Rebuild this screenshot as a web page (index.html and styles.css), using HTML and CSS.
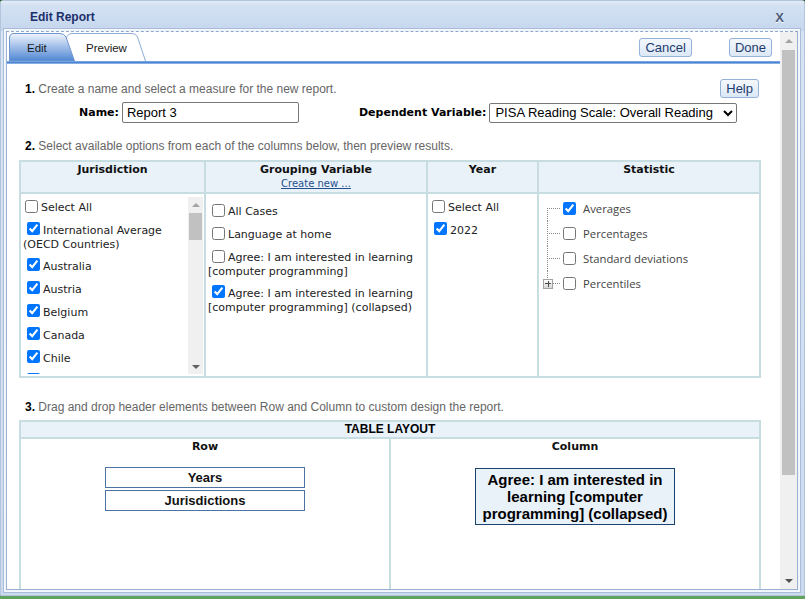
FILE: index.html
```html
<!DOCTYPE html>
<html>
<head>
<meta charset="utf-8">
<title>Edit Report</title>
<link rel="stylesheet" href="styles.css">
</head>
<body>
<div class="window">
  <div class="titlebar">
    <span class="title">Edit Report</span>
    <span class="close">X</span>
  </div>
  <div class="panel">
    <div class="main">
      <div class="tabbar">
        <div class="tab tab-edit">
          <svg class="tab-bg" viewBox="0 0 66 28" width="66" height="28" preserveAspectRatio="none">
            <defs>
              <linearGradient id="ge" x1="0" y1="0" x2="0" y2="1">
                <stop offset="0" stop-color="#f0f5fc"/>
                <stop offset="0.35" stop-color="#b6cdee"/>
                <stop offset="1" stop-color="#5087d4"/>
              </linearGradient>
            </defs>
            <path d="M0.5,28 L0.5,5 Q0.5,0.5 5,0.5 L51,0.5 Q55,0.5 57,4 L65.5,28 Z" fill="url(#ge)" stroke="#6f95cf" stroke-width="1"/>
          </svg>
          <span class="tab-label">Edit</span>
        </div>
        <div class="tab tab-preview">
          <svg class="tab-bg" viewBox="0 0 84 28" width="84" height="28" preserveAspectRatio="none">
            <path d="M0,28 L4,6 Q5.5,0.5 10,0.5 L70,0.5 Q74,0.5 75.5,4 L83.5,28" fill="#ffffff" stroke="#8eaad6" stroke-width="1"/>
          </svg>
          <span class="tab-label">Preview</span>
        </div>
        <div class="spacer"></div>
        <button class="btn">Cancel</button>
        <button class="btn done">Done</button>
      </div>
      <div class="tabline"></div>

      <div class="step1">
        <p class="step"><b>1.</b> Create a name and select a measure for the new report.</p>
        <button class="btn help">Help</button>
      </div>

      <div class="fields">
        <label class="flabel" for="rname">Name:</label>
        <input id="rname" class="name-input" type="text" value="Report 3">
        <label class="flabel dep" for="dvar">Dependent Variable:</label>
        <select id="dvar" class="dep-select">
          <option>PISA Reading Scale: Overall Reading</option>
        </select>
      </div>

      <p class="step step2"><b>2.</b> Select available options from each of the columns below, then preview results.</p>

      <div class="grid">
        <div class="hcell"><div class="htitle">Jurisdiction</div></div>
        <div class="hcell"><div class="htitle">Grouping Variable</div><a class="create" href="#">Create new ...</a></div>
        <div class="hcell"><div class="htitle">Year</div></div>
        <div class="hcell"><div class="htitle">Statistic</div></div>

        <div class="bcell jcell">
          <div class="items">
            <div class="item sel-all"><input type="checkbox">Select All</div>
            <div class="item two"><input type="checkbox" checked>International Average (OECD Countries)</div>
            <div class="item"><input type="checkbox" checked>Australia</div>
            <div class="item"><input type="checkbox" checked>Austria</div>
            <div class="item"><input type="checkbox" checked>Belgium</div>
            <div class="item"><input type="checkbox" checked>Canada</div>
            <div class="item"><input type="checkbox" checked>Chile</div>
            <div class="item"><input type="checkbox" checked></div>
          </div>
          <div class="sbar">
            <div class="sb-btn"><span class="arr-up"></span></div>
            <div class="sb-thumb"></div>
            <div class="sb-fill"></div>
            <div class="sb-btn"><span class="arr-down"></span></div>
          </div>
        </div>

        <div class="bcell gcell">
          <div class="item"><input type="checkbox">All Cases</div>
          <div class="item"><input type="checkbox">Language at home</div>
          <div class="item two"><input type="checkbox">Agree: I am interested in learning [computer programming]</div>
          <div class="item two"><input type="checkbox" checked>Agree: I am interested in learning [computer programming] (collapsed)</div>
        </div>

        <div class="bcell ycell">
          <div class="item sel-all"><input type="checkbox">Select All</div>
          <div class="item"><input type="checkbox" checked>2022</div>
        </div>

        <div class="bcell scell">
          <ul class="tree">
            <li><span class="branch first"></span><input type="checkbox" checked><span>Averages</span></li>
            <li><span class="branch mid"></span><input type="checkbox"><span>Percentages</span></li>
            <li><span class="branch mid"></span><input type="checkbox"><span>Standard deviations</span></li>
            <li><span class="branch last"><span class="plus"></span></span><input type="checkbox"><span>Percentiles</span></li>
          </ul>
        </div>
      </div>

      <p class="step step3"><b>3.</b> Drag and drop header elements between Row and Column to custom design the report.</p>

      <div class="layout">
        <div class="lhead">TABLE LAYOUT</div>
        <div class="lbody">
          <div class="lcol">
            <div class="lh">Row</div>
            <div class="rowbox first-box">Years</div>
            <div class="rowbox">Jurisdictions</div>
          </div>
          <div class="lcol">
            <div class="lh">Column</div>
            <div class="colbox">Agree: I am interested in learning [computer programming] (collapsed)</div>
          </div>
        </div>
      </div>
    </div>
    <div class="vscroll">
      <div class="vs-btn"><span class="arr-up"></span></div>
      <div class="vs-thumb"></div>
      <div class="vs-fill"></div>
      <div class="vs-btn"><span class="arr-down dark"></span></div>
    </div>
  </div>
</div>
</body>
</html>
```

FILE: styles.css
```css
* { box-sizing: border-box; }

html, body {
  margin: 0;
  padding: 0;
}

body {
  width: 805px;
  height: 599px;
  overflow: hidden;
  background: linear-gradient(#2f5a30 0 1px, #5fa35f 1px);
  font-family: "Liberation Sans", Arial, sans-serif;
}

.window {
  width: 805px;
  height: 596px;
  display: flex;
  flex-direction: column;
  background: linear-gradient(#d9e4f4, #cddbef);
  border: 1px solid #b3c4dd;
  border-radius: 3px 3px 0 0;
  padding: 0 6px 5px 5px;
}

.titlebar {
  height: 30px;
  flex: none;
  margin: 0 -6px 0 -5px;
  padding: 2px 20px 0 29px;
  display: flex;
  align-items: center;
  justify-content: space-between;
  background: linear-gradient(#e2eaf6, #d4e1f3 15%, #c5d7ee);
}

.title {
  font-size: 12px;
  font-weight: bold;
  color: #1b2f6b;
}

.close {
  font-size: 13px;
  font-weight: bold;
  color: #4b5b78;
  text-shadow: 0 1px 0 #ffffff;
}

.panel {
  flex: 1;
  min-height: 0;
  display: flex;
  background: #ffffff;
  border: 1px solid #9bb1d4;
  border-top: 1px dashed #8ea7cc;
  box-shadow: 0 0 0 1px #eef3fa, 0 0 0 2px #f4f7fb, 0 0 0 3px #a9bcd9;
}

.main {
  flex: 1;
  min-width: 0;
  overflow: hidden;
  padding-top: 1px;
}

/* tabs */
.tabbar {
  height: 28px;
  display: flex;
  align-items: flex-start;
  padding: 0 8px 0 2px;
}

.tab {
  position: relative;
  height: 28px;
  flex: none;
  font-size: 11.5px;
  color: #1a1a1a;
}

.tab-bg {
  position: absolute;
  left: 0;
  top: 0;
}

.tab-label {
  position: relative;
  display: block;
  line-height: 28px;
  padding-top: 1px;
}

.tab-edit {
  width: 66px;
  z-index: 2;
}

.tab-edit .tab-label { padding-left: 18px; }

.tab-preview {
  width: 84px;
  margin-left: -13px;
  z-index: 1;
}

.tab-preview .tab-label { padding-left: 24px; }

.spacer { flex: 1; }

.btn {
  font-family: "Liberation Sans", Arial, sans-serif;
  font-size: 13px;
  color: #1e3c6e;
  background: linear-gradient(#f4f8fd, #dce8f6);
  border: 1px solid #94b2da;
  border-radius: 3px;
  height: 19px;
  padding: 0 5px;
  line-height: 17px;
  margin: 5px 0 0 0;
}

.btn.done { margin-left: 37px; }

.tabline {
  height: 3px;
  background: linear-gradient(#8fb4e6, #4b84d2 50%, #a7c5ec);
}

/* steps */
.step {
  margin: 0;
  font-size: 12px;
  line-height: 14px;
  color: #666666;
}

.step b { color: #000000; }

.step1 {
  height: 19px;
  margin: 15px 21px 0 18px;
  display: flex;
  align-items: center;
  justify-content: space-between;
}

.btn.help { margin: 0; }

.fields {
  height: 21px;
  margin: 4px 0 0 72px;
  display: flex;
  align-items: center;
}

.flabel {
  font-family: "DejaVu Sans", Verdana, sans-serif;
  font-size: 11px;
  font-weight: bold;
  color: #000000;
  margin-right: 3px;
}

.flabel.dep { margin-left: 60px; }

.name-input {
  width: 177px;
  height: 21px;
  border: 1px solid #767676;
  border-radius: 2px;
  padding: 0 4px;
  font-family: "Liberation Sans", Arial, sans-serif;
  font-size: 13px;
  color: #000000;
}

.dep-select {
  width: 248px;
  height: 20px;
  border: 1px solid #767676;
  border-radius: 2px;
  background: #ffffff;
  color: #000000;
  font-family: "Liberation Sans", Arial, sans-serif;
  font-size: 13px;
  padding: 0 1px;
}

.step2 { margin: 16px 0 0 18px; }
.step3 { margin: 22px 0 0 18px; }

/* options grid */
.grid {
  margin: 7px 19px 0 12px;
  display: grid;
  grid-template-columns: 183px 220px 109px 220px;
  grid-template-rows: 30px 182px;
  gap: 2px;
  padding: 2px;
  background: #c8dde1;
}

.hcell {
  background: #e9f1f9;
  text-align: center;
  padding-top: 1px;
  font-family: "DejaVu Sans", Verdana, sans-serif;
}

.htitle {
  font-size: 11px;
  font-weight: bold;
  line-height: 14px;
  color: #111111;
}

.create {
  display: block;
  font-size: 10px;
  line-height: 14px;
  color: #1f4f8f;
}

.bcell {
  background: #ffffff;
  overflow: hidden;
  font-family: "DejaVu Sans", Verdana, sans-serif;
  font-size: 11px;
  color: #222222;
}

.item {
  line-height: 14px;
  margin-bottom: 9px;
}

.item.two { margin-bottom: 8px; }

.item input {
  width: 13px;
  height: 13px;
  margin: -1px 3px 0 4px;
  vertical-align: top;
}

.item input:checked { margin-top: -2px; }

.item.sel-all input { margin-left: 2px; }

.jcell {
  display: flex;
  padding: 3px 1px 2px 0;
}

.jcell .items {
  flex: 1;
  overflow: hidden;
  padding: 4px 0 0 2px;
}

.sbar {
  width: 15px;
  flex: none;
  background: #f0f0f0;
  display: flex;
  flex-direction: column;
  align-items: center;
}

.sb-btn {
  height: 15px;
  width: 15px;
  flex: none;
  display: flex;
  align-items: center;
  justify-content: center;
}

.sb-thumb {
  width: 13px;
  height: 27px;
  margin-top: 1px;
  background: #c1c1c1;
  flex: none;
}

.sb-fill { flex: 1; }

.arr-up {
  width: 0;
  height: 0;
  border-left: 4px solid transparent;
  border-right: 4px solid transparent;
  border-bottom: 4px solid #a3a3a3;
}

.arr-down {
  width: 0;
  height: 0;
  border-left: 4px solid transparent;
  border-right: 4px solid transparent;
  border-top: 4px solid #606060;
}

.gcell { padding: 11px 2px 0 2px; }

.ycell { padding: 7px 2px 0 2px; }

/* statistic tree */
.scell {
  font-family: "Open Sans", "Segoe UI", sans-serif;
  font-size: 11.3px;
  color: #444444;
}

.tree {
  list-style: none;
  margin: 0;
  padding: 2px 0 0 8px;
}

.tree li {
  height: 25px;
  display: flex;
  align-items: center;
}

.tree input {
  width: 13px;
  height: 13px;
  margin: 0 7px 0 0;
  flex: none;
}

.branch {
  width: 16px;
  height: 25px;
  flex: none;
  display: flex;
  align-items: center;
  background-repeat: no-repeat;
}

.branch.first {
  background-image:
    repeating-linear-gradient(90deg, #8a8a8a 0 1px, transparent 1px 2px),
    repeating-linear-gradient(180deg, #8a8a8a 0 1px, transparent 1px 2px);
  background-position: 0 12px, 0 12px;
  background-size: 14px 1px, 1px 13px;
}

.branch.mid {
  background-image:
    repeating-linear-gradient(90deg, #8a8a8a 0 1px, transparent 1px 2px),
    repeating-linear-gradient(180deg, #8a8a8a 0 1px, transparent 1px 2px);
  background-position: 0 12px, 0 0;
  background-size: 14px 1px, 1px 25px;
}

.branch.last {
  background-image:
    repeating-linear-gradient(90deg, #8a8a8a 0 1px, transparent 1px 2px),
    repeating-linear-gradient(180deg, #8a8a8a 0 1px, transparent 1px 2px);
  background-position: 0 12px, 0 0;
  background-size: 14px 1px, 1px 12px;
}

.plus {
  width: 10px;
  height: 10px;
  margin-left: -4px;
  border: 1px solid #a2a2a2;
  background:
    linear-gradient(#4a4a4a, #4a4a4a) center / 6px 1px no-repeat,
    linear-gradient(#4a4a4a, #4a4a4a) center / 1px 6px no-repeat,
    linear-gradient(#ffffff, #d6d6d6);
}

/* table layout */
.layout {
  margin: 6px 19px 0 12px;
  border: 2px solid #c8dde1;
  height: 220px;
  display: flex;
  flex-direction: column;
}

.lhead {
  height: 17px;
  flex: none;
  background: #e9f1f9;
  border-bottom: 2px solid #c8dde1;
  text-align: center;
  font-size: 12px;
  font-weight: bold;
  line-height: 15px;
  color: #000000;
}

.lbody {
  flex: 1;
  display: grid;
  grid-template-columns: 368px 368px;
  gap: 2px;
  background: #c8dde1;
}

.lcol {
  background: #ffffff;
  display: flex;
  flex-direction: column;
  align-items: center;
  padding-top: 1px;
}

.lh {
  font-family: "DejaVu Sans", Verdana, sans-serif;
  font-size: 11px;
  font-weight: bold;
  line-height: 14px;
  color: #111111;
}

.rowbox {
  width: 200px;
  height: 21px;
  margin-top: 2px;
  border: 1px solid #4c73a1;
  text-align: center;
  font-size: 13px;
  font-weight: bold;
  line-height: 19px;
  color: #111111;
}

.rowbox.first-box { margin-top: 13px; }

.colbox {
  width: 200px;
  height: 57px;
  margin-top: 14px;
  border: 1px solid #1d4270;
  background: #e9f1f9;
  padding: 2px 4px;
  text-align: center;
  font-size: 15px;
  font-weight: bold;
  line-height: 17px;
  color: #000000;
}

/* main vertical scrollbar */
.vscroll {
  width: 17px;
  flex: none;
  background: #f0f0f0;
  display: flex;
  flex-direction: column;
  align-items: center;
}

.vs-btn {
  width: 17px;
  height: 17px;
  flex: none;
  display: flex;
  align-items: center;
  justify-content: center;
}

.vs-thumb {
  width: 13px;
  height: 425px;
  margin-top: 1px;
  flex: none;
  background: #c1c1c1;
}

.vs-fill { flex: 1; }

.arr-down.dark { border-top-color: #505050; }
```
